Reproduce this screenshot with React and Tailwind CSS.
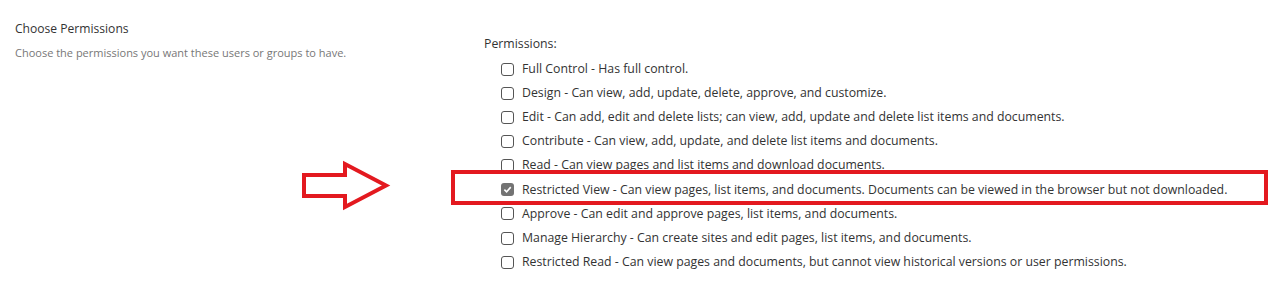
import React from "react";

const perms = [
  { name: "Full Control", desc: "Has full control." },
  { name: "Design", desc: "Can view, add, update, delete, approve, and customize." },
  { name: "Edit", desc: "Can add, edit and delete lists; can view, add, update and delete list items and documents." },
  { name: "Contribute", desc: "Can view, add, update, and delete list items and documents." },
  { name: "Read", desc: "Can view pages and list items and download documents." },
  { name: "Restricted View", desc: "Can view pages, list items, and documents. Documents can be viewed in the browser but not downloaded.", checked: true },
  { name: "Approve", desc: "Can edit and approve pages, list items, and documents." },
  { name: "Manage Hierarchy", desc: "Can create sites and edit pages, list items, and documents." },
  { name: "Restricted Read", desc: "Can view pages and documents, but cannot view historical versions or user permissions." },
];

const Box = ({ checked }) =>
  checked ? (
    <span className="w-[13px] h-[13px] rounded-[3px] bg-[#737373] flex items-center justify-center shrink-0">
      <svg width="9" height="9" viewBox="0 0 10 10">
        <path d="M1.5 5.2 L4 7.6 L8.6 2.4" fill="none" stroke="#fff" strokeWidth="1.8" />
      </svg>
    </span>
  ) : (
    <span className="w-[13px] h-[13px] rounded-[3px] border border-[#555] bg-white shrink-0" />
  );

const App = () => {
  return (
    <div
      className="relative w-[1286px] h-[299px] bg-white text-[#333] overflow-hidden"
      style={{ fontFamily: '"Open Sans", "Noto Sans", sans-serif' }}
    >
      <div className="flex">
        {/* LEFT */}
        <div className="w-[484px] pl-[15px] pt-[19px] shrink-0">
          <h2 className="text-[12.1px] leading-[20px] text-[#333]">Choose Permissions</h2>
          <p className="mt-[6px] text-[11px] leading-[16px] text-[#777]">
            Choose the permissions you want these users or groups to have.
          </p>
        </div>

        {/* RIGHT */}
        <div className="pt-[34px]">
          <p className="text-[12.3px] leading-[20px]">Permissions:</p>
          <div className="mt-[3px] pl-[17px]">
            {perms.map((p) => (
              <div key={p.name} className="flex items-center gap-[8px] h-[24.15px] text-[12.3px] whitespace-nowrap">
                <Box checked={p.checked} />
                <span>
                  {p.name} - {p.desc}
                </span>
              </div>
            ))}
          </div>
        </div>
      </div>

      {/* ANNOTATIONS */}
      <svg className="absolute left-[295px] top-[155px]" width="100" height="62" viewBox="295 155 100 62">
        <polygon
          points="304,175 345,175 345,164 386,185.5 345,207 345,196 304,196"
          fill="none"
          stroke="#e3191f"
          strokeWidth="4"
          strokeLinejoin="miter"
        />
      </svg>
      <div className="absolute left-[451px] top-[170px] w-[817px] h-[35px] border-[4.5px] border-[#e3191f]" />
    </div>
  );
};

export default App;
